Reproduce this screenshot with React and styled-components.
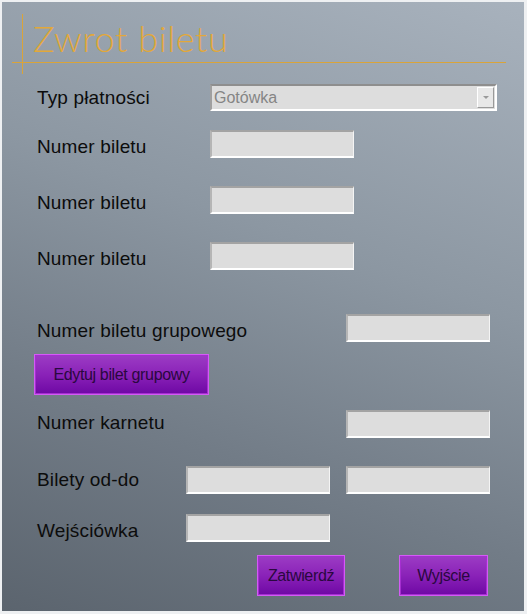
import React from 'react';
import styled, { createGlobalStyle } from 'styled-components';

const GlobalStyle = createGlobalStyle`
  html, body {
    margin: 0;
    padding: 0;
    background: #ffffff;
  }
  * {
    box-sizing: border-box;
  }
`;

const Window = styled.div`
  width: 527px;
  height: 614px;
  border: 2px solid #eef0f2;
  border-right-width: 3px;
  border-bottom-width: 3px;
  background: linear-gradient(200deg, #a8b2bd 0%, #8c97a2 40%, #727c87 70%, #5b646e 100%);
  font-family: "Liberation Sans", Arial, sans-serif;
  color: #0c0c0c;
  padding: 12px 0 0 0;
  display: flex;
  flex-direction: column;
`;

const Header = styled.div`
  position: relative;
  margin-left: 20px;
  height: 60px;
  border-left: 1px solid #d9a43a;
  padding: 6px 0 0 10px;

  &::after {
    content: '';
    position: absolute;
    left: -11px;
    width: 494px;
    top: 48px;
    height: 1px;
    background: #d9a43a;
  }
`;

const Title = styled.h1`
  margin: 0;
  font-family: "Lato", "DejaVu Sans", sans-serif;
  font-weight: 300;
  font-size: 36px;
  line-height: 36px;
  letter-spacing: 0.6px;
  color: #e2a83a;
`;

const Form = styled.div`
  display: flex;
  flex-direction: column;
  padding-left: 35px;
`;

const Row = styled.div`
  display: flex;
  align-items: center;
  gap: ${(p) => p.$gap || 0}px;
  margin-top: ${(p) => p.$top || 0}px;
`;

const Label = styled.div`
  width: ${(p) => p.$width}px;
  flex: none;
  font-size: 19px;
  line-height: 22px;
  letter-spacing: 0.15px;
  margin-top: ${(p) => p.$shift || 0}px;
`;

const Field = styled.div`
  width: ${(p) => p.$width || 144}px;
  height: 28px;
  flex: none;
  background: #dddddd;
  border-top: 2px solid #a3a3a3;
  border-left: 2px solid #b5b5b5;
  border-bottom: 2px solid #ffffff;
  border-right: 1px solid #f4f4f4;
`;

const Combo = styled.div`
  width: 287px;
  height: 27px;
  flex: none;
  display: flex;
  align-items: center;
  justify-content: space-between;
  background: #dddddd;
  border-top: 2px solid #8e8e8e;
  border-left: 2px solid #a0a0a0;
  border-bottom: 2px solid #ffffff;
  border-right: 2px solid #ffffff;
  padding: 0 1px 0 2px;
`;

const ComboText = styled.span`
  font-size: 16px;
  color: #858585;
`;

const ComboArrow = styled.div`
  width: 17px;
  height: 21px;
  background: #e8e8e8;
  border-top: 1px solid #ffffff;
  border-left: 1px solid #ffffff;
  border-bottom: 1px solid #9a9a9a;
  border-right: 1px solid #9a9a9a;
  display: flex;
  align-items: center;
  justify-content: center;

  &::after {
    content: '';
    width: 0;
    height: 0;
    border-left: 3px solid transparent;
    border-right: 3px solid transparent;
    border-top: 3px solid #9a9a9a;
  }
`;

const Button = styled.button`
  width: ${(p) => p.$width}px;
  height: 41px;
  flex: none;
  padding: 0;
  margin: 0 0 0 ${(p) => p.$left || 0}px;
  border: 1px solid #d35cf5;
  background: linear-gradient(to bottom, #9c3cc4 0%, #8a22b8 50%, #6e08a4 100%);
  box-shadow: inset 0 0 0 1px #a52ed0;
  font-family: "Liberation Sans", Arial, sans-serif;
  font-size: 16px;
  letter-spacing: -0.35px;
  color: #2a0840;
  cursor: pointer;
`;

const Actions = styled.div`
  display: flex;
  gap: 54px;
  margin-top: 13px;
  padding-left: 255px;
`;

export default function App() {
  return (
    <>
      <GlobalStyle />
      <Window>
        <Header>
          <Title>Zwrot biletu</Title>
        </Header>
        <Form>
          <Row $top={10}>
            <Label $width={173} $shift={1}>Typ płatności</Label>
            <Combo>
              <ComboText>Gotówka</ComboText>
              <ComboArrow />
            </Combo>
          </Row>
          <Row $top={19}>
            <Label $width={173} $shift={6}>Numer biletu</Label>
            <Field />
          </Row>
          <Row $top={28}>
            <Label $width={173} $shift={6}>Numer biletu</Label>
            <Field />
          </Row>
          <Row $top={28}>
            <Label $width={173} $shift={6}>Numer biletu</Label>
            <Field />
          </Row>
          <Row $top={44}>
            <Label $width={309} $shift={6}>Numer biletu grupowego</Label>
            <Field />
          </Row>
          <Row $top={12}>
            <Button $width={175} $left={-3}>Edytuj bilet grupowy</Button>
          </Row>
          <Row $top={15}>
            <Label $width={309} $shift={-2}>Numer karnetu</Label>
            <Field />
          </Row>
          <Row $top={28} $gap={16}>
            <Label $width={133}>Bilety od-do</Label>
            <Field />
            <Field />
          </Row>
          <Row $top={20}>
            <Label $width={149} $shift={6}>Wejściówka</Label>
            <Field />
          </Row>
        </Form>
        <Actions>
          <Button $width={88}>Zatwierdź</Button>
          <Button $width={89}>Wyjście</Button>
        </Actions>
      </Window>
    </>
  );
}
